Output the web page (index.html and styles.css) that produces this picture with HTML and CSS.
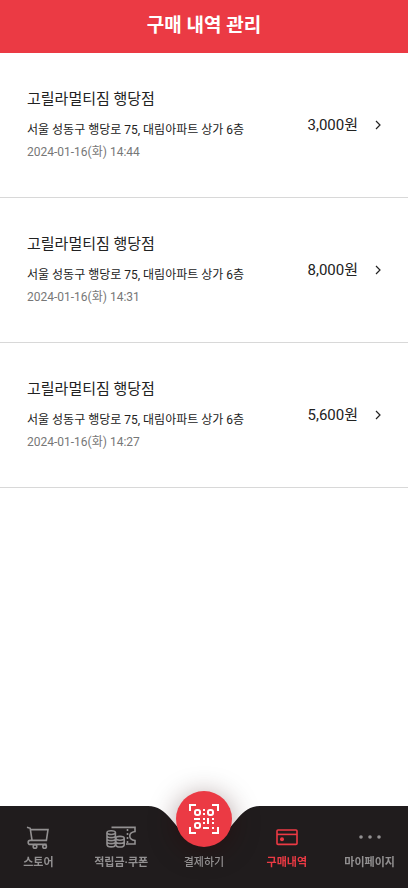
FILE: index.html
```html
<!DOCTYPE html>
<html lang="ko">
<head>
<meta charset="utf-8">
<meta name="viewport" content="width=device-width, initial-scale=1">
<title>구매 내역 관리</title>
<link rel="stylesheet" href="styles.css">
</head>
<body>
<header class="header"><h1>구매 내역 관리</h1></header>
<main class="content">
  <ul class="orders">
    <li><a class="order" href="#">
      <span class="info">
        <strong class="store">고릴라멀티짐 행당점</strong>
        <span class="address">서울 성동구 행당로 75, 대림아파트 상가 6층</span>
        <time class="date" datetime="2024-01-16T14:44">2024-01-16(화) 14:44</time>
      </span>
      <span class="price">3,000원</span>
      <svg class="arrow" viewBox="0 0 6 10" aria-hidden="true"><path d="M1 1l4 4-4 4"/></svg>
    </a></li>
    <li><a class="order" href="#">
      <span class="info">
        <strong class="store">고릴라멀티짐 행당점</strong>
        <span class="address">서울 성동구 행당로 75, 대림아파트 상가 6층</span>
        <time class="date" datetime="2024-01-16T14:31">2024-01-16(화) 14:31</time>
      </span>
      <span class="price">8,000원</span>
      <svg class="arrow" viewBox="0 0 6 10" aria-hidden="true"><path d="M1 1l4 4-4 4"/></svg>
    </a></li>
    <li><a class="order" href="#">
      <span class="info">
        <strong class="store">고릴라멀티짐 행당점</strong>
        <span class="address">서울 성동구 행당로 75, 대림아파트 상가 6층</span>
        <time class="date" datetime="2024-01-16T14:27">2024-01-16(화) 14:27</time>
      </span>
      <span class="price">5,600원</span>
      <svg class="arrow" viewBox="0 0 6 10" aria-hidden="true"><path d="M1 1l4 4-4 4"/></svg>
    </a></li>
  </ul>
</main>
<nav class="tabbar">
  <div class="backdrop" aria-hidden="true">
    <span class="side"></span>
    <svg class="notch" viewBox="0 0 120 82"><path d="M0 0H4C14 0 20 5 26 12L37 25C43 34 50 38 60 38S77 34 83 25L94 12C100 5 106 0 116 0H120V82H0Z"/></svg>
    <span class="side"></span>
  </div>
  <div class="tabs">
    <a class="tab" href="#">
      <svg class="icon" viewBox="0 0 30 24" aria-hidden="true">
        <path d="M4 1.3l3.2 1L9 14.2M7.6 3.6H25L23.4 14.4H7.2a2 2 0 0 0 0 4H23.6"/>
        <circle cx="12" cy="20.4" r="1.8"/><circle cx="21.6" cy="20.4" r="1.8"/>
      </svg>
      <span>스토어</span>
    </a>
    <a class="tab" href="#">
      <svg class="icon" viewBox="0 0 30 24" aria-hidden="true">
        <path d="M5.5 1.4H29V5.5c-7 1-7 8 0 9V18H20M21.5 3v2M21.5 7v2M21.5 11v2M21.5 15v2"/>
        <path d="M1 6.8v11.4c0 3.6 8.4 3.6 8.4 0V6.8M1 9.7c0 2.6 8.4 2.6 8.4 0M1 12.7c0 2.6 8.4 2.6 8.4 0M1 15.7c0 2.6 8.4 2.6 8.4 0"/>
        <ellipse cx="5.2" cy="6.6" rx="4.2" ry="1.9"/>
        <path d="M9.8 12.5v6c0 3.4 8.4 3.4 8.4 0v-6M9.8 15.4c0 2.6 8.4 2.6 8.4 0"/>
        <ellipse cx="14" cy="12.3" rx="4.2" ry="1.9"/>
      </svg>
      <span>적립금·쿠폰</span>
    </a>
    <a class="tab pay" href="#">
      <span class="pay-button">
        <svg class="qr" viewBox="0 0 30 30" aria-hidden="true">
          <path d="M1 7V1h6M23 1h6v6M29 23v6h-6M7 29H1v-6"/>
          <rect x="6" y="6" width="5" height="5" rx="2"/><rect x="19" y="6" width="5" height="5" rx="2"/><rect x="6" y="19" width="5" height="5" rx="2"/>
          <path d="M5 15h6M19 14v6M14 24h6"/>
          <path class="dots" d="M14 5h2v2h-2zM14 9h2v2h-2zM14 14h2v2h-2zM14 18h2v2h-2zM23 14h2v2h-2zM23 18h2v2h-2zM23 23h2v2h-2z"/>
        </svg>
      </span>
      <span>결제하기</span>
    </a>
    <a class="tab active" href="#" aria-current="page">
      <svg class="icon" viewBox="0 0 30 24" aria-hidden="true"><rect x="5" y="4" width="20" height="14.4" rx="1"/><path d="M5 8.4h20"/><circle class="fill" cx="10" cy="13.2" r="2"/></svg>
      <span>구매내역</span>
    </a>
    <a class="tab" href="#">
      <svg class="icon" viewBox="0 0 30 24" aria-hidden="true"><g class="fill"><circle cx="6" cy="11" r="1.8"/><circle cx="15" cy="11" r="1.8"/><circle cx="24" cy="11" r="1.8"/></g></svg>
      <span>마이페이지</span>
    </a>
  </div>
</nav>
</body>
</html>
```

FILE: styles.css
```css
* { box-sizing: border-box; }

body {
  display: flex;
  flex-direction: column;
  min-height: 100vh;
  margin: 0;
  background: #fff;
  color: #222;
  font-family: Roboto, "Noto Sans CJK KR", sans-serif;
}

a { color: inherit; text-decoration: none; }

.header {
  padding: 12px 16px 13px;
  background: #eb3a44;
  color: #fff;
  text-align: center;
}

.header h1 {
  margin: 0;
  font-size: 19px;
  font-weight: 700;
  line-height: 28px;
}

.content { flex: 1; }

.orders { margin: 0; padding: 0; list-style: none; }

.order {
  display: flex;
  align-items: center;
  padding: 33px 27px 34px;
  border-bottom: 1px solid #d8d8d8;
}

.info {
  display: flex;
  flex: 1;
  flex-direction: column;
  min-width: 0;
  white-space: nowrap;
}

.store {
  margin-bottom: 7px;
  font-size: 15px;
  font-weight: 400;
  line-height: 26px;
}

.address { font-size: 12px; line-height: 22px; }

.date { color: #777; font-size: 12px; line-height: 22px; }

.price { font-size: 15px; line-height: 24px; white-space: nowrap; }

.arrow {
  width: 6px;
  height: 10px;
  margin-left: 17px;
  fill: none;
  stroke: #222;
  stroke-width: 1.2;
}

.tabbar {
  position: sticky;
  bottom: 0;
  color: #929091;
}

.backdrop {
  position: absolute;
  inset: 0;
  display: flex;
}

.side { flex: 1; background: #201c1d; }

.notch { width: 120px; height: 82px; fill: #201c1d; }

.tabs {
  position: relative;
  display: grid;
  grid-template-columns: repeat(5, 1fr);
  margin: 0 -3px;
  padding: 20px 0 16px;
}

.tab {
  display: flex;
  flex-direction: column;
  align-items: center;
  justify-content: flex-end;
  gap: 4px;
  font-size: 11px;
  font-weight: 700;
  line-height: 18px;
  white-space: nowrap;
}

.icon {
  width: 30px;
  height: 24px;
  fill: none;
  stroke: currentColor;
  stroke-width: 1.6;
}

.fill { fill: currentColor; stroke: none; }

.active { color: #eb3a44; }

.pay { font-weight: 500; }

.pay-button {
  display: grid;
  place-items: center;
  width: 56px;
  height: 56px;
  margin-top: -35px;
  margin-bottom: 3px;
  border-radius: 50%;
  background: #eb3a44;
  box-shadow: 0 4px 28px rgba(45, 0, 0, 0.4);
}

.qr {
  width: 30px;
  height: 30px;
  fill: none;
  stroke: #fff;
  stroke-width: 2;
}

.dots { fill: #fff; stroke: none; }
```
